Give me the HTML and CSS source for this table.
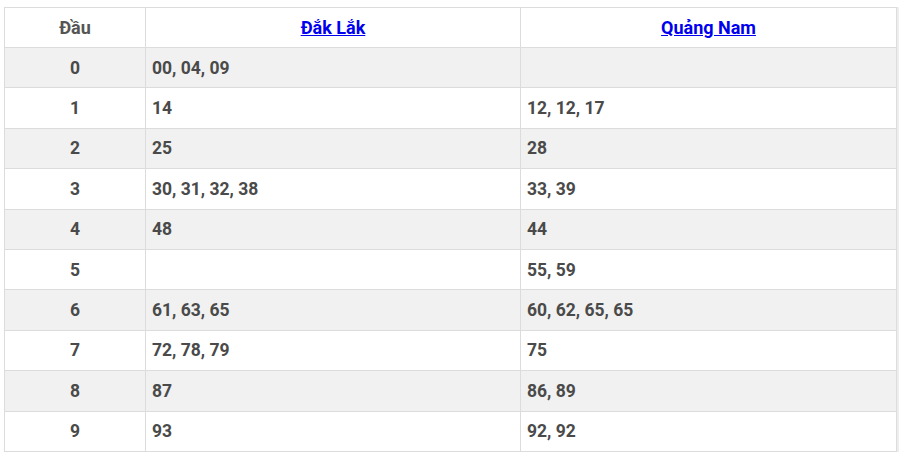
FILE: index.html
```html
<!DOCTYPE html>
<html lang="vi">
<head>
<meta charset="utf-8">
<link rel="stylesheet" href="styles.css">
</head>
<body>
<div class="wrap">
<table class="loto">
  <colgroup><col class="c1"><col class="c2"><col class="c3"></colgroup>
  <thead>
    <tr><th>Đầu</th><th><a href="#">Đắk Lắk</a></th><th><a href="#">Quảng Nam</a></th></tr>
  </thead>
  <tbody>
    <tr><td class="head">0</td><td>00, 04, 09</td><td></td></tr>
    <tr><td class="head">1</td><td>14</td><td>12, 12, 17</td></tr>
    <tr><td class="head">2</td><td>25</td><td>28</td></tr>
    <tr><td class="head">3</td><td>30, 31, 32, 38</td><td>33, 39</td></tr>
    <tr><td class="head">4</td><td>48</td><td>44</td></tr>
    <tr><td class="head">5</td><td></td><td>55, 59</td></tr>
    <tr><td class="head">6</td><td>61, 63, 65</td><td>60, 62, 65, 65</td></tr>
    <tr><td class="head">7</td><td>72, 78, 79</td><td>75</td></tr>
    <tr><td class="head">8</td><td>87</td><td>86, 89</td></tr>
    <tr><td class="head">9</td><td>93</td><td>92, 92</td></tr>
  </tbody>
</table>
</div>
</body>
</html>
```
FILE: styles.css
```css
html, body {
  margin: 0;
  padding: 0;
  background: #fff;
}
.wrap {
  padding: 7px 0 0 4px;
}
.loto {
  border-collapse: collapse;
  width: 892px;
  table-layout: fixed;
  font-family: Roboto, "Liberation Sans", sans-serif;
  font-size: 17.5px;
  font-weight: 700;
  color: #4a4a4a;
  box-shadow: 2px 0 0 #eeeeee;
}
.c1 { width: 141px; }
.c2 { width: 375px; }
.c3 { width: 376px; }
.loto th, .loto td {
  border: 1px solid #dcdcdc;
  height: 40.4px;
  padding: 0 6px;
  line-height: 20px;
  vertical-align: middle;
  box-sizing: border-box;
}
.loto th {
  text-align: center;
  color: #555;
  font-size: 18px;
  height: 40px;
}
.loto th a {
  color: #0000ee;
  text-decoration: underline;
}
.loto td.head {
  text-align: center;
}
.loto td {
  text-align: left;
}
.loto tbody tr:nth-child(odd) {
  background: #f1f1f1;
}
```
